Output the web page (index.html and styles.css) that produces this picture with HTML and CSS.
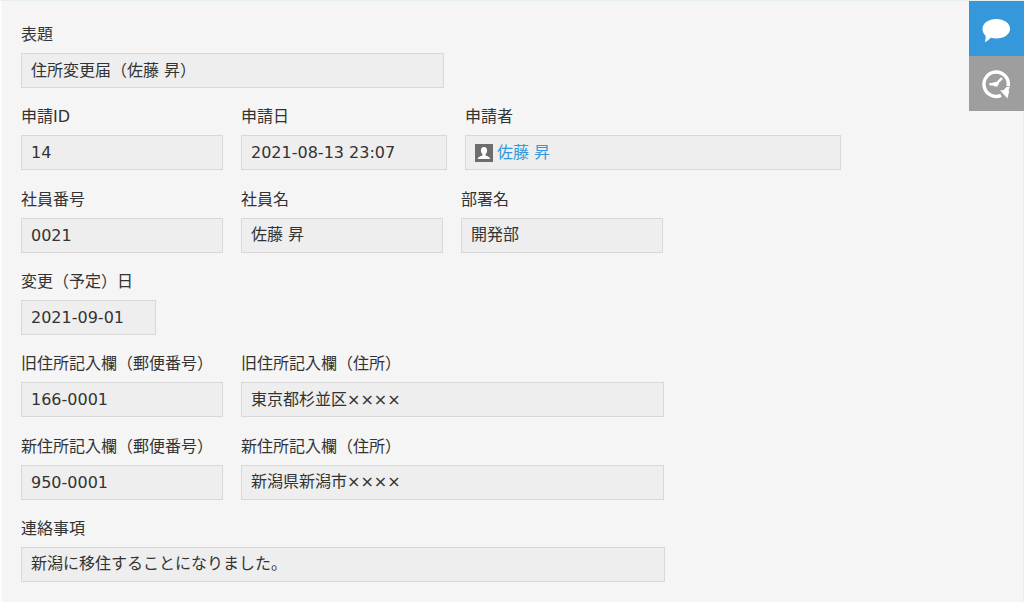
FILE: index.html
```html
<!DOCTYPE html>
<html lang="ja">
<head>
<meta charset="utf-8">
<meta name="viewport" content="width=device-width, initial-scale=1">
<title>住所変更届</title>
<link rel="stylesheet" href="styles.css">
</head>
<body>
<div class="page">
  <main class="record">
    <div class="row">
      <div class="field field-wide"><label for="title">表題</label><input id="title" class="value value-text" readonly value="住所変更届（佐藤 昇）"></div>
    </div>
    <div class="row">
      <div class="field"><label for="request-id">申請ID</label><input id="request-id" class="value" readonly value="14"></div>
      <div class="field field-datetime"><label for="request-date">申請日</label><input id="request-date" class="value" readonly value="2021-08-13 23:07"></div>
      <div class="field field-user">
        <span class="label" id="applicant">申請者</span>
        <div class="value user" role="group" aria-labelledby="applicant">
          <svg class="avatar" viewBox="0 0 18 18" aria-hidden="true"><path fill="#6c6e6c" d="M0 0h18v18H0z"/><path fill="#fff" d="M9 3c2 0 3.100 1.300 3.100 3.400 0 1.800-.7 3-1.500 3.700v1.300c1.600.8 4.200 1.100 4.600 3.600H2.800c.4-2.500 3-2.800 4.600-3.600v-1.300c-.8-.7-1.500-1.900-1.500-3.700C5.900 4.300 7 3 9 3z"/></svg>
          <a href="#user">佐藤 昇</a>
        </div>
      </div>
    </div>
    <div class="row">
      <div class="field"><label for="employee-no">社員番号</label><input id="employee-no" class="value" readonly value="0021"></div>
      <div class="field"><label for="employee-name">社員名</label><input id="employee-name" class="value value-text" readonly value="佐藤 昇"></div>
      <div class="field"><label for="department">部署名</label><input id="department" class="value value-text" readonly value="開発部"></div>
    </div>
    <div class="row">
      <div class="field field-date"><label for="change-date">変更（予定）日</label><input id="change-date" class="value" readonly value="2021-09-01"></div>
    </div>
    <div class="row">
      <div class="field"><label for="old-zip">旧住所記入欄（郵便番号）</label><input id="old-zip" class="value" readonly value="166-0001"></div>
      <div class="field field-wide"><label for="old-address">旧住所記入欄（住所）</label><input id="old-address" class="value value-text" readonly value="東京都杉並区××××"></div>
    </div>
    <div class="row">
      <div class="field"><label for="new-zip">新住所記入欄（郵便番号）</label><input id="new-zip" class="value" readonly value="950-0001"></div>
      <div class="field field-wide"><label for="new-address">新住所記入欄（住所）</label><input id="new-address" class="value value-text" readonly value="新潟県新潟市××××"></div>
    </div>
    <div class="row">
      <div class="field field-full"><label for="notes">連絡事項</label><input id="notes" class="value value-text" readonly value="新潟に移住することになりました。"></div>
    </div>
  </main>
  <aside class="tabs">
    <button class="tab tab-active" type="button" aria-label="コメント">
      <svg viewBox="0 0 55 55" aria-hidden="true"><path fill="#fff" d="M27.300 18c7.700 0 13.800 4.300 13.800 9.800s-6.100 9.800-13.800 9.800c-1.900 0-3.800-.3-5.400-.8-1.300 1.300-3.300 3.200-6.200 4.500.9-2 1.100-4.500.9-6.500-2.100-1.800-3.100-4.300-3.100-7 0-5.500 6.100-9.800 13.800-9.800z"/></svg>
    </button>
    <button class="tab" type="button" aria-label="変更履歴">
      <svg viewBox="0 0 55 55" aria-hidden="true"><path fill="none" stroke="#fff" stroke-width="3.400" d="M39.200 30.200A12.200 12.200 0 1 0 32 39.400"/><path fill="#fff" d="M31 34.300h3.500l3-3.300h3.200l-1.200 3.500.8.500-1.900 7.500-2.200-2.500z"/><path fill="none" stroke="#fff" stroke-width="2.500" d="M20.500 28.300h6.300l6.200-6.200"/><path fill="#fff" d="M22.500 27l4-1 3.500 1-1.500 3.500h-3z"/></svg>
    </button>
  </aside>
</div>
</body>
</html>
```
FILE: styles.css
```css
* { box-sizing: border-box; }

body {
  margin: 0;
  background: #f5f5f5;
  color: #333;
  font: 16px/24px "DejaVu Sans", "Noto Sans CJK JP", sans-serif;
}

.page {
  display: flex;
  align-items: flex-start;
  min-height: 100vh;
  border-top: 1px solid #e6eeee;
  box-shadow: inset 2px 0 #fbfdfd, inset -1px 0 #e6eeee;
}

.record {
  display: flex;
  flex: 1;
  flex-direction: column;
  justify-content: space-between;
  align-self: stretch;
  gap: 16px;
  padding: 22px 0 20px 21px;
}

.row {
  display: flex;
  gap: 18px;
}

.field { width: 202px; }
.field-date { width: 135px; }
.field-datetime { width: 206px; }
.field-user { width: 376px; }
.field-wide { width: 423px; }
.field-full { width: 644px; }

label,
.label {
  display: block;
  height: 24px;
  margin-bottom: 6px;
  white-space: nowrap;
}

.value {
  display: block;
  width: 100%;
  height: 35px;
  padding: 0 9px;
  border: 1px solid #d8d8d8;
  border-radius: 0;
  outline: 0;
  background: #eee;
  color: inherit;
  font: inherit;
}

.value-text { padding-bottom: 4px; }

.user {
  display: flex;
  align-items: center;
  gap: 4px;
}

.user a {
  color: #3498db;
  text-decoration: none;
}

.avatar {
  width: 18px;
  height: 18px;
}

.tabs {
  display: flex;
  flex-direction: column;
}

.tab {
  width: 55px;
  height: 55px;
  padding: 0;
  border: 0;
  background: #9e9e9e;
  cursor: pointer;
}

.tab-active { background: #3498db; }

.tab svg {
  display: block;
  width: 100%;
  height: 100%;
}
```
